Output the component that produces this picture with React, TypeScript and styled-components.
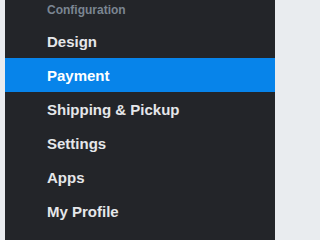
import React from 'react';
import styled, { createGlobalStyle } from 'styled-components';

const GlobalStyle = createGlobalStyle`
  html, body {
    margin: 0;
    padding: 0;
    background: #e9ecef;
  }
`;

const items = ['Design', 'Payment', 'Shipping & Pickup', 'Settings', 'Apps', 'My Profile'];

export default function App() {
    const active = 'Payment';

    return (
        <>
            <GlobalStyle />
            <Page>
                <Sidebar>
                    <SectionTitle>Configuration</SectionTitle>
                    <NavList>
                        {items.map((item) => (
                            <NavItem key={item} isActive={item === active}>{item}</NavItem>
                        ))}
                    </NavList>
                </Sidebar>
            </Page>
        </>
    );
}

const Page = styled.div`
  display: flex;
  min-height: 100vh;
  padding-left: 5px;
`;

const Sidebar = styled.nav`
  width: 270px;
  background: #232529;
  font-family: "Liberation Sans", Arial, sans-serif;
`;

const SectionTitle = styled.div`
  height: 24px;
  padding-left: 42px;
  font-size: 12px;
  font-weight: bold;
  line-height: 20px;
  color: #7b8692;
`;

const NavList = styled.ul`
  list-style: none;
  margin: 0;
  padding: 0;
`;

const NavItem = styled.li<{isActive: boolean}>`
  height: 34px;
  padding-left: 42px;
  display: flex;
  align-items: center;
  font-size: 15px;
  font-weight: bold;
  color: ${({isActive}) => isActive ? '#ffffff' : '#e5e7ea'};
  background: ${({isActive}) => isActive ? '#0784ea' : 'transparent'};
`;
